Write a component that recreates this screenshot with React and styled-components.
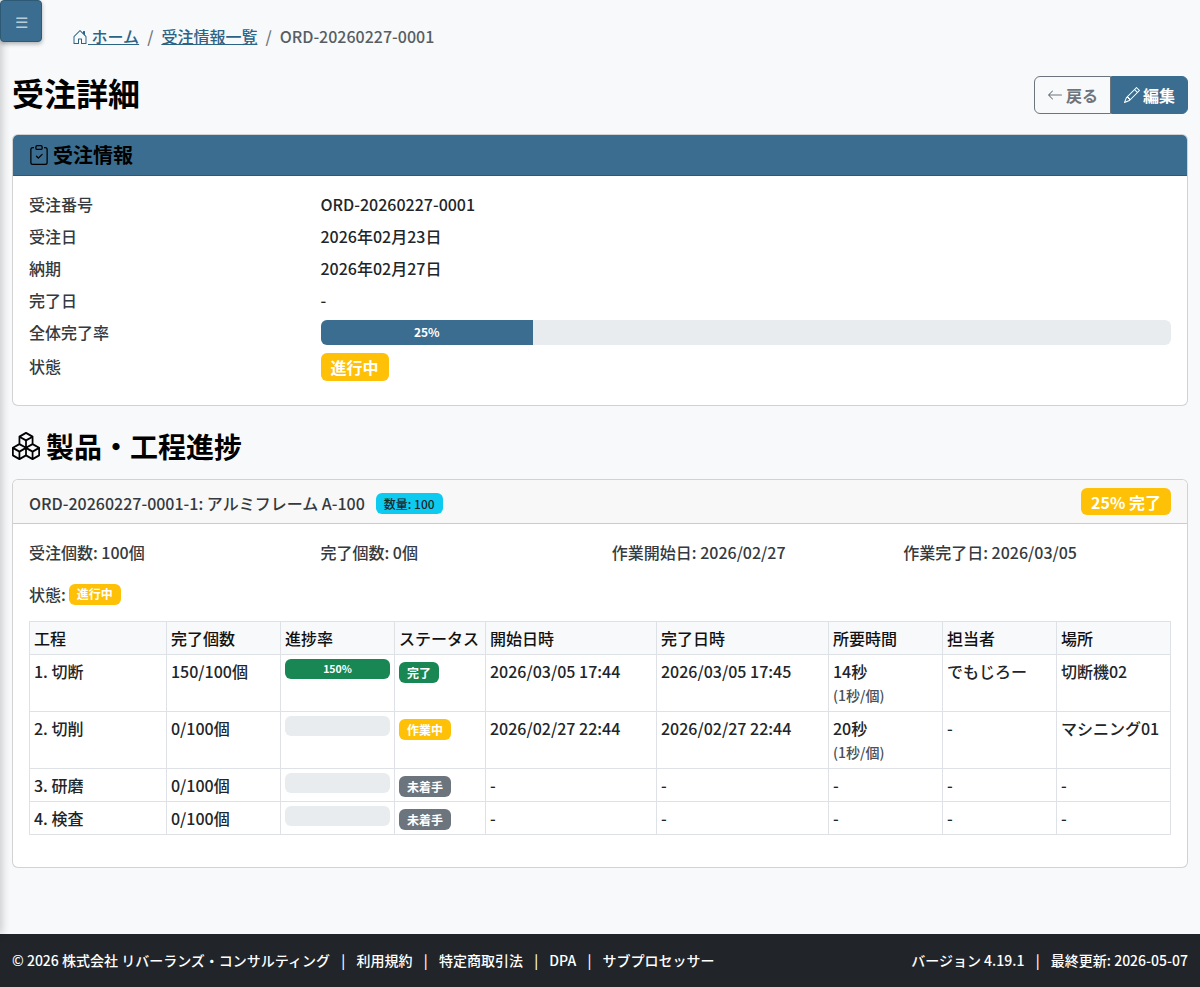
import React from 'react';
import styled, { createGlobalStyle } from 'styled-components';
import { BsHouseDoor, BsClipboardCheck, BsArrowLeft, BsPencil, BsBoxes } from 'react-icons/bs';

const GlobalStyle = createGlobalStyle`
  html, body {
    margin: 0;
    padding: 0;
    background: #f8f9fa;
    color: #212529;
    font-family: "Noto Sans CJK JP", "Noto Sans", sans-serif;
    font-size: 16px;
    font-weight: 500;
    line-height: 1.5;
  }
`;

const PRIMARY = '#3a6d8f';

const Page = styled.div`
  position: relative;
  min-height: 987px;
  display: flex;
  flex-direction: column;
  overflow: hidden;
`;

const SideShadow = styled.div`
  position: absolute;
  left: -10px;
  top: 0;
  bottom: 53px;
  width: 10px;
  box-shadow: 2px 0 8px rgba(0, 0, 0, 0.2);
`;

const MenuButton = styled.button`
  position: absolute;
  left: 0;
  top: 0;
  width: 42px;
  height: 42px;
  padding: 0;
  border: 1px solid #2f5a76;
  border-radius: 4px;
  background: ${PRIMARY};
  color: #b9cbd6;
  font-size: 15px;
  font-family: "Noto Sans CJK JP", sans-serif;
  box-shadow: 0 2px 4px rgba(0, 0, 0, 0.3);
`;

const Main = styled.main`
  flex: 1;
  padding: 24px 12px 0;
`;

const Breadcrumb = styled.nav`
  display: flex;
  align-items: center;
  height: 24px;
  padding-left: 60px;
  margin-bottom: 28px;
  color: #565e64;
`;

const Crumb = styled.a`
  color: #2c6485;
  text-decoration: underline;
  svg {
    vertical-align: -2px;
  }
`;

const Divider = styled.span`
  padding: 0 8px;
  color: #6c757d;
`;

const TitleRow = styled.div`
  display: flex;
  justify-content: space-between;
  align-items: center;
  height: 38px;
  margin-bottom: 20px;
`;

const Title = styled.h1`
  margin: 0 0 6px;
  font-size: 32px;
  line-height: 38px;
  font-weight: 700;
  color: #000;
`;

const ButtonGroup = styled.div`
  display: flex;
`;

const ActionButton = styled.a`
  display: flex;
  align-items: center;
  gap: 3px;
  height: 38px;
  box-sizing: border-box;
  padding: 0 12px;
  font-weight: 700;
  border: 1px solid ${(p) => (p.$solid ? PRIMARY : '#6c757d')};
  background: ${(p) => (p.$solid ? PRIMARY : 'transparent')};
  color: ${(p) => (p.$solid ? '#fff' : '#6c757d')};
  border-radius: ${(p) => (p.$solid ? '0 6px 6px 0' : '6px 0 0 6px')};
`;

const Card = styled.section`
  background: #fff;
  border: 1px solid rgba(0, 0, 0, 0.175);
  border-radius: 6px;
  overflow: hidden;
`;

const InfoHeader = styled.div`
  display: flex;
  align-items: center;
  gap: 4px;
  height: 40px;
  padding: 0 16px;
  background: ${PRIMARY};
  border-bottom: 1px solid rgba(0, 0, 0, 0.175);
  color: #000;
  font-size: 20px;
  font-weight: 700;
`;

const InfoBody = styled.div`
  display: grid;
  grid-template-columns: 291.5px 1fr;
  grid-template-rows: repeat(5, 32px) 38px;
  padding: 12px 16px 19px;
  align-items: center;
`;

const InfoLabel = styled.div`
  color: #343a40;
  margin-bottom: ${(p) => p.$lift || 0}px;
`;

const InfoValue = styled.div`
  color: #212529;
`;

const Progress = styled.div`
  display: flex;
  height: ${(p) => p.$height}px;
  background: #e9ecef;
  border-radius: 6px;
  overflow: hidden;
`;

const ProgressFill = styled.div`
  display: flex;
  align-items: center;
  justify-content: center;
  background: ${(p) => p.$color};
  color: #fff;
  font-size: ${(p) => p.$size}px;
  font-weight: 700;
`;

const Badge = styled.span`
  display: inline-flex;
  align-items: center;
  justify-content: center;
  box-sizing: border-box;
  height: ${(p) => p.$height}px;
  padding: 0 ${(p) => p.$pad}px;
  border-radius: 6px;
  background: ${(p) => p.$bg};
  color: ${(p) => p.$fg || '#fff'};
  font-size: ${(p) => p.$size}px;
  font-weight: ${(p) => p.$weight || 700};
  white-space: nowrap;
`;

const QuantityBadge = styled(Badge)`
  margin-top: 2px;
`;

const CompletionBadge = styled(Badge)`
  margin-bottom: 2px;
`;

const BadgeCell = styled.div`
  display: flex;
`;

const SectionTitle = styled.h2`
  display: flex;
  align-items: center;
  gap: 6px;
  margin: 22px 0 15px;
  height: 36px;
  font-size: 28px;
  font-weight: 700;
  color: #000;
`;

const ProductHeader = styled.div`
  display: flex;
  align-items: center;
  justify-content: space-between;
  box-sizing: border-box;
  height: 44px;
  padding: 2px 16px 0;
  background: #f8f8f8;
  border-bottom: 1px solid rgba(0, 0, 0, 0.175);
`;

const ProductName = styled.div`
  display: flex;
  align-items: center;
  gap: 11px;
  color: #343a40;
`;

const ProductBody = styled.div`
  padding: 16px 16px 32px;
`;

const SummaryRow = styled.div`
  display: grid;
  grid-template-columns: repeat(4, 291.4px);
  height: 24px;
  margin-bottom: 18px;
  color: #343a40;
`;

const StatusRow = styled.div`
  display: flex;
  align-items: center;
  gap: 3px;
  height: 24px;
  margin-bottom: 15px;
  color: #343a40;
`;

const Table = styled.table`
  width: 1141px;
  table-layout: fixed;
  border-collapse: collapse;
`;

const Th = styled.th`
  width: ${(p) => p.$w}px;
  height: 33px;
  box-sizing: border-box;
  padding: 4px;
  border: 1px solid #dee2e6;
  background: #f8f9fa;
  text-align: left;
  font-weight: 500;
  color: #111;
  white-space: nowrap;
`;

const Td = styled.td`
  padding: 4px;
  height: ${(p) => (p.$tall ? 57 : 33)}px;
  box-sizing: border-box;
  border: 1px solid #dee2e6;
  vertical-align: top;
  color: #212529;
`;

const Sub = styled.div`
  font-size: 14px;
  line-height: 24px;
  color: #495057;
`;

const StatusCell = styled.div`
  display: flex;
  padding-top: 3px;
`;

const Footer = styled.footer`
  display: flex;
  justify-content: space-between;
  align-items: center;
  height: 53px;
  padding: 0 12px;
  background: #212529;
  color: #fff;
  font-size: 14px;
  font-weight: 500;
`;

const FooterSep = styled.span`
  padding: 0 11.25px;
`;

const info = [
  ['受注番号', 'ORD-20260227-0001'],
  ['受注日', '2026年02月23日'],
  ['納期', '2026年02月27日'],
  ['完了日', '-'],
];

const columns = [
  ['工程', 137],
  ['完了個数', 114],
  ['進捗率', 114],
  ['ステータス', 91],
  ['開始日時', 171],
  ['完了日時', 172],
  ['所要時間', 114],
  ['担当者', 114],
  ['場所', 114],
];

const STATUS = {
  done: { label: '完了', bg: '#198754' },
  working: { label: '作業中', bg: '#ffc107' },
  waiting: { label: '未着手', bg: '#6c757d' },
};

const rows = [
  { name: '1. 切断', qty: '150/100個', pct: 150, status: 'done', start: '2026/03/05 17:44', end: '2026/03/05 17:45', time: '14秒', per: '(1秒/個)', who: 'でもじろー', place: '切断機02' },
  { name: '2. 切削', qty: '0/100個', pct: 0, status: 'working', start: '2026/02/27 22:44', end: '2026/02/27 22:44', time: '20秒', per: '(1秒/個)', who: '-', place: 'マシニング01' },
  { name: '3. 研磨', qty: '0/100個', pct: 0, status: 'waiting', start: '-', end: '-', time: '-', who: '-', place: '-' },
  { name: '4. 検査', qty: '0/100個', pct: 0, status: 'waiting', start: '-', end: '-', time: '-', who: '-', place: '-' },
];

export default function App() {
  return (
    <Page>
      <GlobalStyle />
      <SideShadow />
      <MenuButton>☰</MenuButton>
      <Main>
        <Breadcrumb>
          <Crumb><BsHouseDoor size={16} /> ホーム</Crumb>
          <Divider>/</Divider>
          <Crumb>受注情報一覧</Crumb>
          <Divider>/</Divider>
          <span>ORD-20260227-0001</span>
        </Breadcrumb>
        <TitleRow>
          <Title>受注詳細</Title>
          <ButtonGroup>
            <ActionButton><BsArrowLeft size={16} />戻る</ActionButton>
            <ActionButton $solid><BsPencil size={16} />編集</ActionButton>
          </ButtonGroup>
        </TitleRow>
        <Card>
          <InfoHeader><BsClipboardCheck size={20} />受注情報</InfoHeader>
          <InfoBody>
            {info.map(([label, value]) => (
              <React.Fragment key={label}>
                <InfoLabel>{label}</InfoLabel>
                <InfoValue>{value}</InfoValue>
              </React.Fragment>
            ))}
            <InfoLabel>全体完了率</InfoLabel>
            <Progress $height={25}>
              <ProgressFill $color={PRIMARY} $size={12} style={{ width: '25%' }}>25%</ProgressFill>
            </Progress>
            <InfoLabel $lift={3}>状態</InfoLabel>
            <BadgeCell><Badge $bg="#ffc107" $height={28} $pad={10} $size={16}>進行中</Badge></BadgeCell>
          </InfoBody>
        </Card>
        <SectionTitle><BsBoxes size={28} />製品・工程進捗</SectionTitle>
        <Card>
          <ProductHeader>
            <ProductName>
              <span>ORD-20260227-0001-1: アルミフレーム A-100</span>
              <QuantityBadge $bg="#0dcaf0" $fg="#212529" $height={21} $pad={8} $size={12} $weight={500}>数量: 100</QuantityBadge>
            </ProductName>
            <CompletionBadge $bg="#ffc107" $height={27} $pad={10} $size={16}>25% 完了</CompletionBadge>
          </ProductHeader>
          <ProductBody>
            <SummaryRow>
              <div>受注個数: 100個</div>
              <div>完了個数: 0個</div>
              <div>作業開始日: 2026/02/27</div>
              <div>作業完了日: 2026/03/05</div>
            </SummaryRow>
            <StatusRow>
              <span>状態:</span>
              <Badge $bg="#ffc107" $height={21} $pad={8} $size={12}>進行中</Badge>
            </StatusRow>
            <Table>
              <thead>
                <tr>
                  {columns.map(([label, w]) => <Th key={label} $w={w}>{label}</Th>)}
                </tr>
              </thead>
              <tbody>
                {rows.map((r) => (
                  <tr key={r.name}>
                    <Td $tall={!!r.per}>{r.name}</Td>
                    <Td>{r.qty}</Td>
                    <Td>
                      <Progress $height={20}>
                        {r.pct > 0 && (
                          <ProgressFill $color="#198754" $size={10.5} style={{ width: '100%' }}>{r.pct}%</ProgressFill>
                        )}
                      </Progress>
                    </Td>
                    <Td>
                      <StatusCell>
                        <Badge $bg={STATUS[r.status].bg} $height={21} $pad={8} $size={12}>{STATUS[r.status].label}</Badge>
                      </StatusCell>
                    </Td>
                    <Td>{r.start}</Td>
                    <Td>{r.end}</Td>
                    <Td>
                      {r.time}
                      {r.per && <Sub>{r.per}</Sub>}
                    </Td>
                    <Td>{r.who}</Td>
                    <Td>{r.place}</Td>
                  </tr>
                ))}
              </tbody>
            </Table>
          </ProductBody>
        </Card>
      </Main>
      <Footer>
        <div>
          © 2026 株式会社 リバーランズ・コンサルティング
          <FooterSep>|</FooterSep>利用規約
          <FooterSep>|</FooterSep>特定商取引法
          <FooterSep>|</FooterSep>DPA
          <FooterSep>|</FooterSep>サブプロセッサー
        </div>
        <div>
          バージョン 4.19.1
          <FooterSep>|</FooterSep>最終更新: 2026-05-07
        </div>
      </Footer>
    </Page>
  );
}
